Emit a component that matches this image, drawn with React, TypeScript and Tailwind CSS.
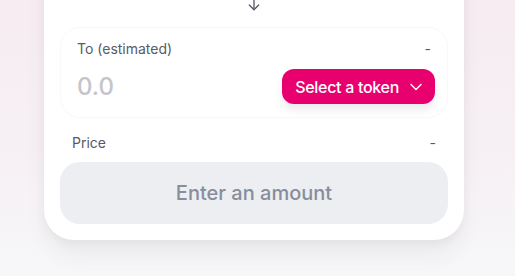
import React from "react";
import { ArrowDown, ChevronDown } from "lucide-react";

export default function App() {
  return (
    <div
      className="h-[276px] w-full overflow-hidden bg-[linear-gradient(180deg,#f6ecf2_0%,#f6f0f4_55%,#f7f7f9_100%)]"
      style={{ fontFamily: "Inter, 'Noto Sans', sans-serif" }}
    >
      <div className="ml-[44px] mt-[-119px] w-[420px] rounded-[30px] bg-white p-4 shadow-[0px_0px_1px_rgba(0,0,0,0.01),0px_4px_8px_rgba(0,0,0,0.04),0px_16px_24px_rgba(0,0,0,0.04),0px_24px_32px_rgba(0,0,0,0.01)]">
        <div className="flex flex-col">
          {/* From panel (off-screen) */}
          <div className="h-[90px] rounded-[20px] border border-[#f7f8fa]" />
          <div className="mt-[10px] flex h-[16px] items-center justify-center">
            <ArrowDown size={16} strokeWidth={2} color="#565a69" />
          </div>
          {/* To panel */}
          <div className="mt-[14px] rounded-[20px] border border-[#f7f8fa]">
            <div className="flex items-center justify-between px-4 pt-[13px] text-[14px] leading-4 text-[#565a69]">
              <span>To (estimated)</span>
              <span>-</span>
            </div>
            <div className="flex items-center justify-between pb-[13px] pl-4 pr-3 pt-3">
              <span className="text-[24px] leading-none font-medium text-[#c3c5cb]">0.0</span>
              <button className="flex h-[35px] items-center rounded-[12px] bg-[#e8006f] pl-[13px] pr-[9px] text-[16px] font-medium tracking-[-0.3px] text-white shadow-[0px_6px_10px_rgba(0,0,0,0.075)]">
                <span>Select a token</span>
                <ChevronDown size={20} strokeWidth={1.6} className="ml-[7px]" color="#ffffff" />
              </button>
            </div>
          </div>
          <div className="mt-[17px] flex items-center justify-between px-3 text-[14px] leading-4 text-[#565a69]">
            <span>Price</span>
            <span>-</span>
          </div>
          <button className="mt-[11px] flex h-[62px] w-full items-center justify-center rounded-[20px] bg-[#edeef2] text-[20px] font-medium text-[#888d9b]">
            Enter an amount
          </button>
        </div>
      </div>
    </div>
  );
}
